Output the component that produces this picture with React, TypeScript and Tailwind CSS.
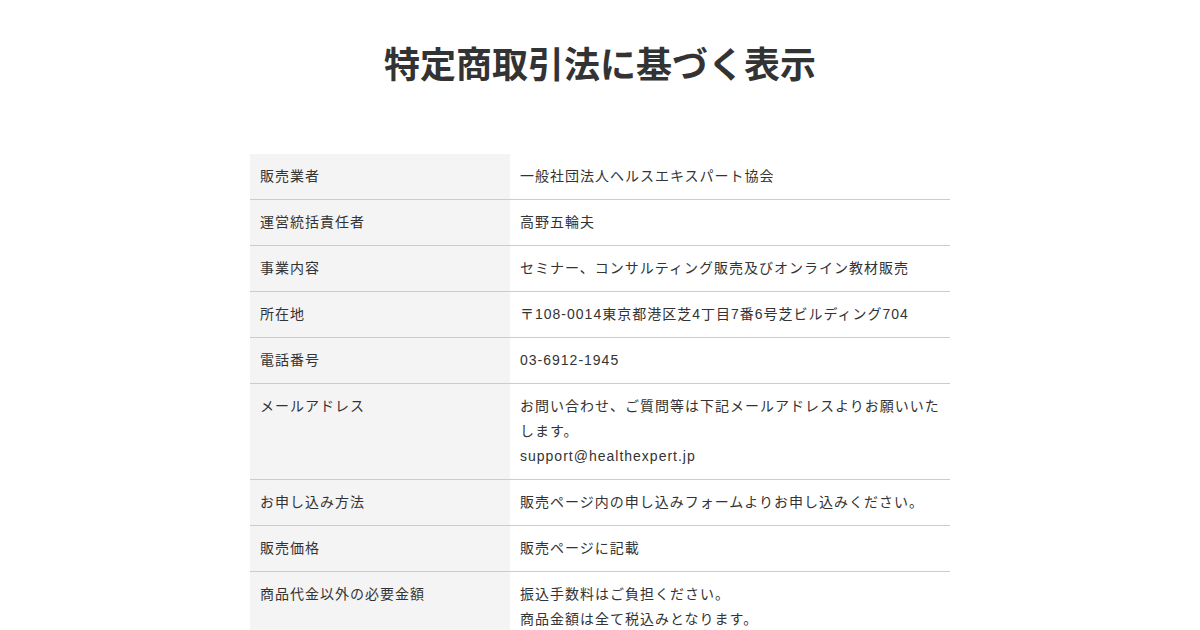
import React from "react";

const rows: { label: string; value: React.ReactNode }[] = [
  { label: "販売業者", value: "一般社団法人ヘルスエキスパート協会" },
  { label: "運営統括責任者", value: "高野五輪夫" },
  { label: "事業内容", value: "セミナー、コンサルティング販売及びオンライン教材販売" },
  { label: "所在地", value: "〒108-0014東京都港区芝4丁目7番6号芝ビルディング704" },
  { label: "電話番号", value: "03-6912-1945" },
  {
    label: "メールアドレス",
    value: (
      <>
        お問い合わせ、ご質問等は下記メールアドレスよりお願いいたします。
        <br />
        support@healthexpert.jp
      </>
    ),
  },
  { label: "お申し込み方法", value: "販売ページ内の申し込みフォームよりお申し込みください。" },
  { label: "販売価格", value: "販売ページに記載" },
  {
    label: "商品代金以外の必要金額",
    value: (
      <>
        振込手数料はご負担ください。
        <br />
        商品金額は全て税込みとなります。
      </>
    ),
  },
];

export default function App() {
  return (
    <div className="w-[1200px] h-[630px] overflow-hidden bg-white text-[#333]">
      <div className="font-['Liberation_Sans','Noto_Sans_CJK_JP',sans-serif]">
        <h1 className="pt-10 text-center text-[36px] leading-[52px] font-bold text-[#333]">
          特定商取引法に基づく表示
        </h1>
        <div className="mx-auto mt-[62px] w-[700px]">
          {rows.map((r, i) => (
            <div key={i} className="flex border-b border-[#cccccc]">
              <div className="w-[260px] shrink-0 bg-[#f4f4f4] px-[10px] py-[10px] text-[14px] leading-[25px] tracking-[1px]">
                {r.label}
              </div>
              <div className="flex-1 pl-[10px] pr-[6px] py-[10px] text-[14px] leading-[25px] tracking-[1px]">
                {r.value}
              </div>
            </div>
          ))}
        </div>
      </div>
    </div>
  );
}
